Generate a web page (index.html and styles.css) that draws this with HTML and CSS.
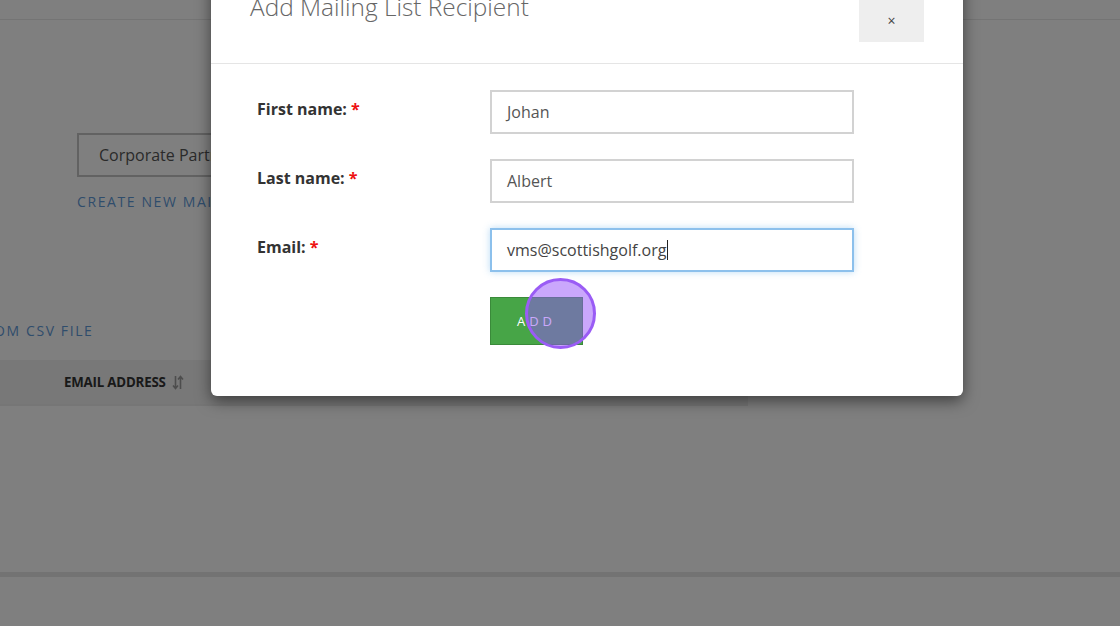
FILE: index.html
```html
<!DOCTYPE html>
<html lang="en">
<head>
<meta charset="utf-8">
<title>Add Mailing List Recipient</title>
<link rel="stylesheet" href="styles.css">
</head>
<body>
<div class="page">
  <div class="topbar"></div>
  <div class="content">
    <div class="select-box">Corporate Partners</div>
    <a class="link create-link">Create new mailing list</a>
    <a class="link import-link">Import from CSV file</a>
    <div class="table-head">
      <div class="th-cell">Email address
        <svg class="sort" width="12" height="15" viewBox="0 0 12 15"><path d="M3.5 1v12M1 10.5l2.5 3 2.5-3" fill="none" stroke="#9a9a9a" stroke-width="1.6"/><path d="M8.5 14V2M6 4.5l2.5-3 2.5 3" fill="none" stroke="#9a9a9a" stroke-width="1.6"/></svg>
      </div>
    </div>
    <div class="bottom-rule"></div>
  </div>
</div>
<div class="backdrop"></div>
<div class="modal">
  <div class="modal-header">
    <h4 class="modal-title">Add Mailing List Recipient</h4>
    <button class="close-btn">×</button>
  </div>
  <div class="modal-body">
    <div class="form-grid">
      <label class="lbl">First name: <span class="req">*</span></label>
      <div class="field">Johan</div>
      <label class="lbl">Last name: <span class="req">*</span></label>
      <div class="field">Albert</div>
      <label class="lbl">Email: <span class="req">*</span></label>
      <div class="field focused">vms@scottishgolf.org<span class="caret"></span></div>
      <div></div>
      <div class="btn-row"><button class="add-btn">ADD</button></div>
    </div>
  </div>
</div>
<div class="cursor-dot"></div>
</body>
</html>
```
FILE: styles.css
```css
* { box-sizing: border-box; }
html, body { margin: 0; padding: 0; }
body {
  width: 1120px;
  height: 626px;
  overflow: hidden;
  background: #fff;
  font-family: "Open Sans", "Liberation Sans", sans-serif;
  position: relative;
}
.page { width: 1120px; height: 626px; }
.topbar { height: 20px; border-bottom: 1px solid #e8e8e8; }
.content { display: flex; flex-direction: column; align-items: flex-start; }
.select-box {
  margin: 113px 0 0 77px;
  width: 320px;
  height: 44px;
  border: 2px solid #c4c4c4;
  padding: 0 20px;
  display: flex;
  align-items: center;
  font-size: 16px;
  color: #555;
}
.link {
  text-transform: uppercase;
  letter-spacing: 1.6px;
  font-size: 14px;
  color: #5f9ad8;
  text-decoration: none;
}
.create-link { margin: 15px 0 0 77px; line-height: 20px; }
.import-link { margin: 109px 0 0 -92px; line-height: 20px; }
.table-head {
  margin-top: 19px;
  width: 748px;
  height: 46px;
  background: #f1f1f1;
  border-bottom: 2px solid #ececec;
  display: flex;
  align-items: center;
}
.th-cell {
  margin-left: 64px;
  font-size: 13.3px;
  font-weight: 700;
  color: #333;
  text-transform: uppercase;
  display: flex;
  align-items: center;
  gap: 6px;
  letter-spacing: -0.2px;
}
.bottom-rule {
  margin-top: 166px;
  width: 1120px;
  height: 5px;
  background: #e6e6e6;
}
.backdrop {
  position: absolute;
  inset: 0;
  background: rgba(0, 0, 0, 0.5);
}
.modal {
  position: absolute;
  left: 211px;
  top: -24px;
  width: 752px;
  background: #fff;
  border-radius: 6px;
  box-shadow: 0 5px 15px rgba(0, 0, 0, 0.5);
}
.modal-header {
  height: 88px;
  border-bottom: 1px solid #e5e5e5;
  display: flex;
  justify-content: space-between;
  align-items: flex-start;
  padding: 15px 39px 0 39px;
}
.modal-title {
  margin: 1px 0 0 0;
  font-size: 24.4px;
  line-height: 30px;
  font-weight: 300;
  color: #666;
}
.close-btn {
  width: 65px;
  height: 51px;
  border: none;
  background: #eee;
  color: #444;
  font-size: 14px;
  font-family: "Open Sans", "Liberation Sans", sans-serif;
  padding: 8px 0 0 0;
}
.modal-body { padding: 26px 46px 51px 46px; }
.form-grid {
  display: grid;
  grid-template-columns: 233px 364px;
  row-gap: 25px;
}
.lbl {
  font-size: 16px;
  font-weight: 700;
  color: #333;
  line-height: 20px;
  padding-top: 9px;
}
.req { color: #e11; }
.field {
  height: 44px;
  border: 2px solid #d2d2d2;
  padding: 0 15px;
  display: flex;
  align-items: center;
  font-size: 16px;
  color: #555;
}
.field.focused {
  border-color: #8cc0ec;
  box-shadow: 0 0 7px rgba(102, 175, 233, 0.45);
  color: #444;
}
.caret {
  display: inline-block;
  width: 1px;
  height: 20px;
  background: #222;
  margin-left: 1px;
}
.btn-row { display: flex; }
.add-btn {
  width: 93px;
  height: 48px;
  background: #47a547;
  border: 1px solid #3a8a3a;
  color: #fff;
  font-family: "Open Sans", "Liberation Sans", sans-serif;
  font-size: 13px;
  letter-spacing: 4px;
  padding: 0 0 0 0;
}
.cursor-dot {
  position: absolute;
  left: 525px;
  top: 278px;
  width: 71px;
  height: 71px;
  border-radius: 50%;
  border: 3px solid #9a5cf5;
  background: rgba(150, 80, 250, 0.5);
}
```
